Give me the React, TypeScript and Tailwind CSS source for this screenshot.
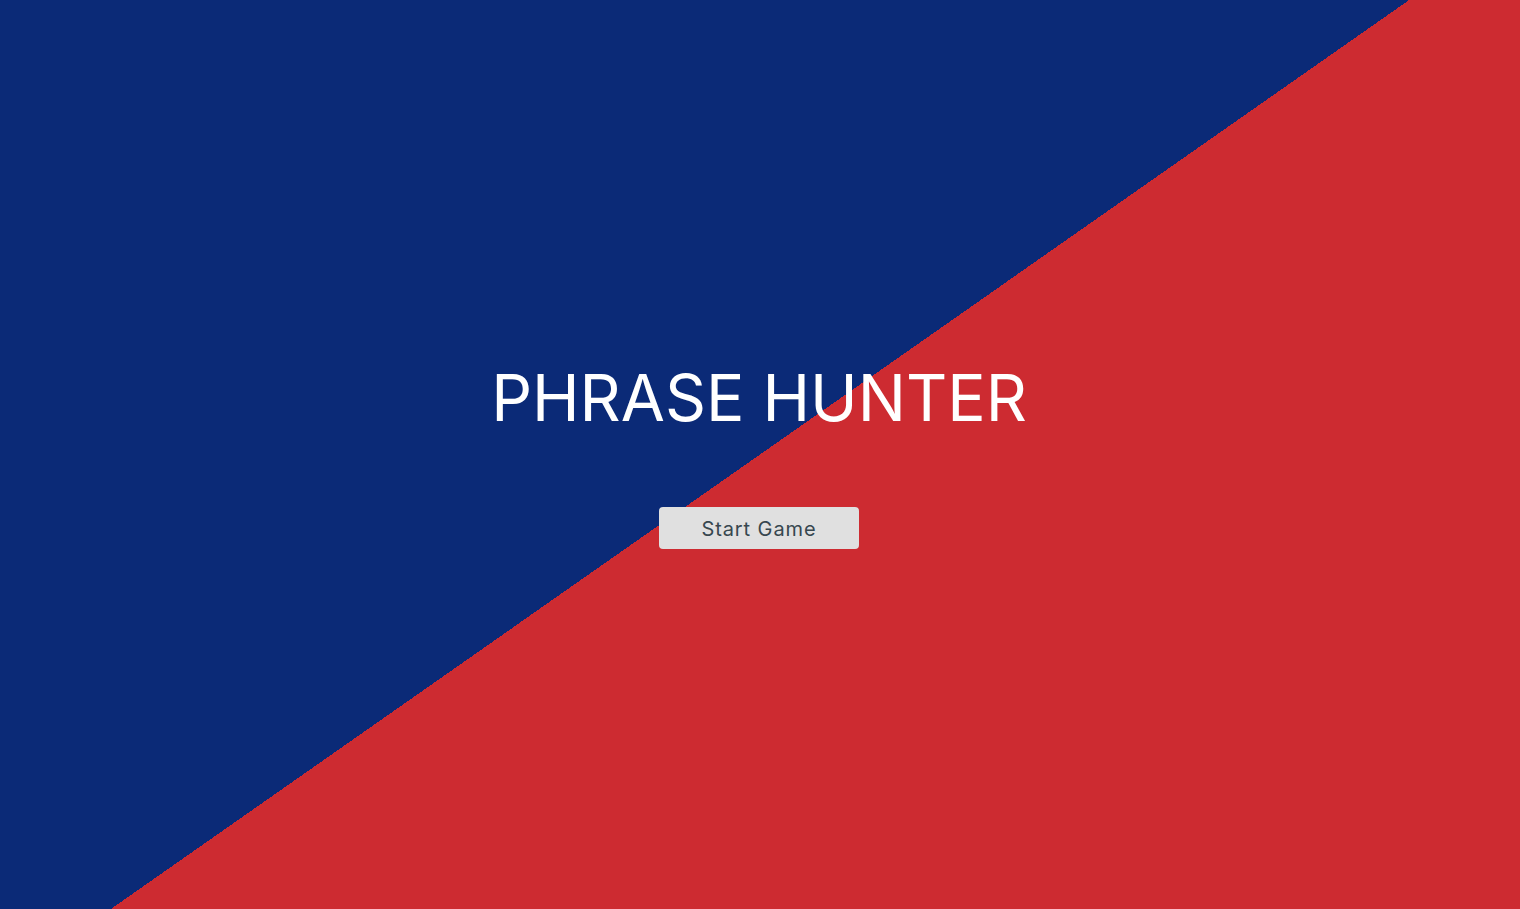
export default function App() {
  return (
    <div
      className="w-full h-[909px] overflow-hidden flex flex-col items-center bg-[linear-gradient(145deg,#0b2a77_50%,#cd2b31_50%)]"
      style={{ fontFamily: "Inter, 'Noto Sans', sans-serif" }}
    >
      <h1 className="mt-[362px] mr-[2px] text-[64px] leading-[72px] font-normal text-white tracking-[0px]">
        PHRASE HUNTER
      </h1>
      <button className="mt-[73px] mr-[2px] w-[200px] h-[42px] pt-[2px] rounded-[4px] bg-[#e0e0e0] text-[#37474f] text-[20px] tracking-[0.9px]">
        Start Game
      </button>
    </div>
  );
}
